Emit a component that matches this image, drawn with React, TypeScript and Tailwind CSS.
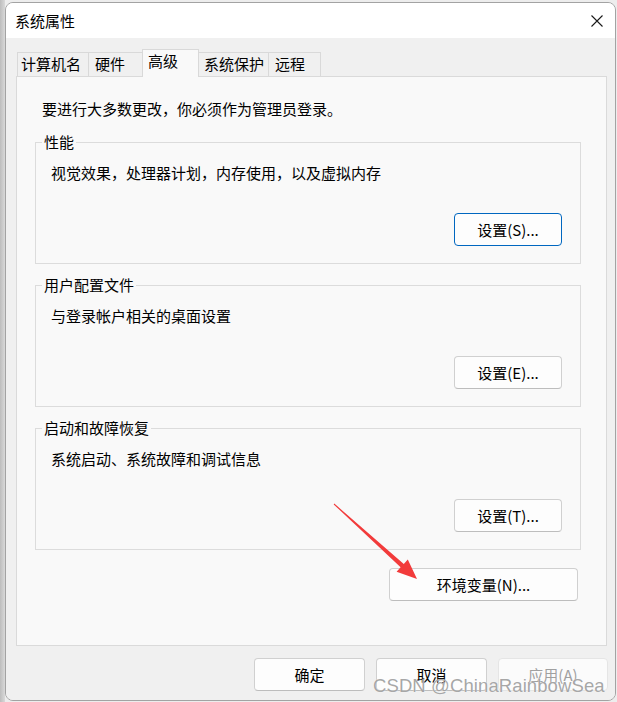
const tabs = [
  { label: '计算机名', w: 'w-[72px]', pl: 'pl-[3px]' },
  { label: '硬件', w: 'w-[55px]', pl: 'pl-[6px]' },
  { label: '高级', w: 'w-[57px]', pl: 'pl-[5px]', active: true },
  { label: '系统保护', w: 'w-[71px]', pl: 'pl-[5px]' },
  { label: '远程', w: 'w-[53px]', pl: 'pl-[6px]' },
];

const groups = [
  { title: '性能', desc: '视觉效果，处理器计划，内存使用，以及虚拟内存', button: '设置(S)...', primary: true },
  { title: '用户配置文件', desc: '与登录帐户相关的桌面设置', button: '设置(E)...' },
  { title: '启动和故障恢复', desc: '系统启动、系统故障和调试信息', button: '设置(T)...' },
];

function WinButton({
  children,
  className = '',
  primary,
  disabled,
}: {
  children: React.ReactNode;
  className?: string;
  primary?: boolean;
  disabled?: boolean;
}) {
  const tone = disabled
    ? 'bg-[#fbfbfb] border-[#e5e5e5] text-[#a0a0a0]'
    : primary
      ? 'bg-[#fdfdfd] border-[#0067c0] text-black'
      : 'bg-[#fdfdfd] border-[#d0d0d0] border-b-[#bdbdbd] text-black';
  return (
    <button
      className={`h-[33px] rounded-[4px] border flex items-center justify-center text-[15px] leading-5 ${tone} ${className}`}
    >
      {children}
    </button>
  );
}

function GroupBox({
  title,
  desc,
  button,
  primary,
  className = '',
}: {
  title: string;
  desc: string;
  button: string;
  primary?: boolean;
  className?: string;
}) {
  return (
    <div className={`relative h-[122px] border border-[#dcdcdc] flex flex-col ${className}`}>
      <span className="absolute -top-[11px] left-[6px] px-[2px] bg-[#f9f9f9] text-[15px] leading-5">
        {title}
      </span>
      <p className="pt-[20px] pl-[15px] text-[15px] leading-5">{desc}</p>
      <WinButton primary={primary} className="self-end mt-[30px] mr-[18px] w-[108px]">
        {button}
      </WinButton>
    </div>
  );
}

export default function App() {
  return (
    <div
      className="relative w-[617px] h-[702px] overflow-hidden bg-[#ededed] text-black"
      style={{ fontFamily: '"Noto Sans CJK SC", "Noto Sans", sans-serif' }}
    >
      <div className="absolute left-0 top-0 h-full w-[5px] bg-gradient-to-r from-[#bdbdbd] to-[#d9d9d9]" />
      <div className="relative ml-[5px] mt-[2px] w-[611px] h-[699px] rounded-[8px] border border-[#a3a3a3] overflow-hidden flex flex-col">
        {/* title bar */}
        <div className="h-[35px] bg-white flex items-center justify-between pl-[9px] pr-[12px]">
          <span className="text-[15px] leading-5">系统属性</span>
          <svg width="12" height="12" viewBox="0 0 12 12">
            <path d="M0.5 0.5 L11.5 11.5 M11.5 0.5 L0.5 11.5" stroke="#1a1a1a" strokeWidth="1.1" />
          </svg>
        </div>

        {/* body */}
        <div className="flex-1 bg-[#f0f0f0] pt-[11px] pl-[10px] pr-[8px] flex flex-col">
          <div className="relative z-10 -mb-px h-[28px] flex items-end pl-[1px]">
            {tabs.map((t, i) => (
              <div
                key={t.label}
                className={`${t.w} ${t.pl} ${i > 0 ? '-ml-px' : ''} border border-b-0 border-[#d9d9d9] text-[15px] leading-5 pt-px ${
                  t.active ? 'relative h-[28px] bg-[#f9f9f9]' : 'h-[24px] mb-px bg-[#f0f0f0]'
                }`}
              >
                {t.label}
              </div>
            ))}
          </div>

          <div className="h-[570px] border border-[#dadada] bg-[#f9f9f9] flex flex-col">
            <p className="mt-[22px] pl-[25px] text-[15px] leading-5">要进行大多数更改，你必须作为管理员登录。</p>
            <div className="mt-[23px] ml-[18px] mr-[25px] flex flex-col gap-[21px]">
              {groups.map((g) => (
                <GroupBox key={g.title} {...g} />
              ))}
            </div>
            <WinButton className="self-end mt-[18px] mr-[28px] w-[189px]">环境变量(N)...</WinButton>
          </div>

          <div className="mt-[12px] -mr-px flex justify-end gap-[11px]">
            <WinButton className="w-[111px]">确定</WinButton>
            <WinButton className="w-[111px]">取消</WinButton>
            <WinButton disabled className="w-[110px]">应用(A)</WinButton>
          </div>
        </div>
      </div>

      {/* annotation arrow */}
      <svg className="absolute left-0 top-0 pointer-events-none" width="617" height="702">
        <polygon
          points="333.7,504.4 334.3,503.6 403.8,564.0 407.8,559.5 417,579 396.6,571.7 400.6,567.2"
          fill="#f23b3b"
        />
      </svg>

      {/* watermark */}
      <span
        className="absolute left-[373px] top-[674px] text-[18.5px] leading-6 text-[#8f8f8f]/80 tracking-[0.1px]"
        style={{ fontFamily: '"Liberation Sans", Arial, sans-serif', textShadow: '0 0 1px #ffffff' }}
      >
        CSDN @ChinaRainbowSea
      </span>
    </div>
  );
}
